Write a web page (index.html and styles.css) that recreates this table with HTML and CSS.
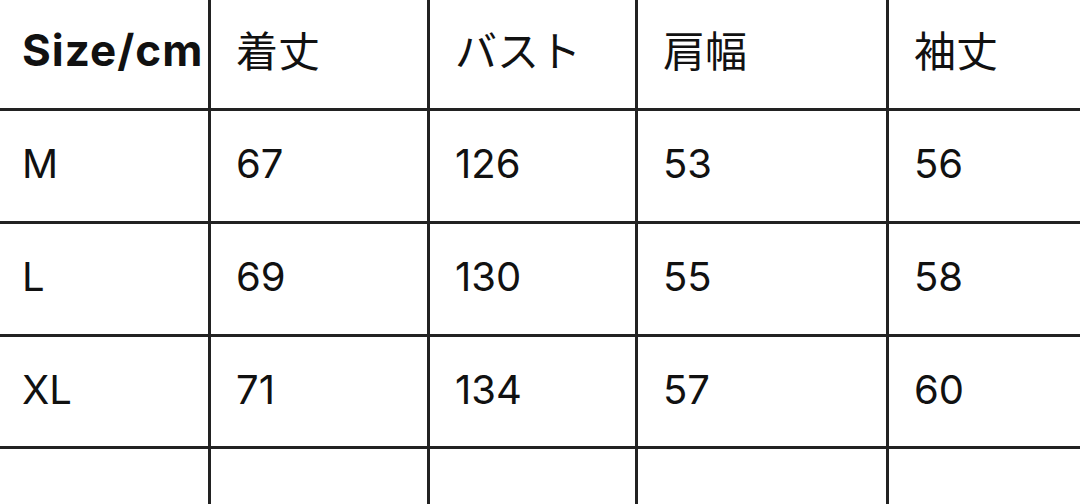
FILE: index.html
```html
<!DOCTYPE html>
<html lang="ja">
<head>
<meta charset="utf-8">
<link rel="stylesheet" href="styles.css">
</head>
<body>
<div class="table">
  <div class="cell head first">Size/cm</div>
  <div class="cell head cjk">着丈</div>
  <div class="cell head cjk">バスト</div>
  <div class="cell head cjk">肩幅</div>
  <div class="cell head cjk">袖丈</div>

  <div class="cell first">M</div>
  <div class="cell">67</div>
  <div class="cell">126</div>
  <div class="cell">53</div>
  <div class="cell">56</div>

  <div class="cell first">L</div>
  <div class="cell">69</div>
  <div class="cell">130</div>
  <div class="cell">55</div>
  <div class="cell">58</div>

  <div class="cell first">XL</div>
  <div class="cell">71</div>
  <div class="cell">134</div>
  <div class="cell">57</div>
  <div class="cell">60</div>

  <div class="cell first"></div>
  <div class="cell"></div>
  <div class="cell"></div>
  <div class="cell"></div>
  <div class="cell"></div>
</div>
</body>
</html>
```

FILE: styles.css
```css
html, body {
  margin: 0;
  padding: 0;
  background: #fff;
  overflow: hidden;
}

.table {
  display: grid;
  grid-template-columns: 208px 216px 205px 248px 1fr;
  grid-template-rows: 108px 110px 110px 109px 55px;
  gap: 3px;
  background: #222;
  width: 1080px;
  font-family: "Inter", "Noto Sans CJK JP", sans-serif;
  color: #111;
}

.cell {
  background: #fff;
  display: flex;
  align-items: center;
  padding: 0 0 4px 25px;
  font-size: 40px;
  line-height: 1;
}

.cell.first {
  padding-left: 22px;
}

.head {
  padding-bottom: 10px;
}

.head.first {
  font-weight: 700;
  font-size: 44px;
  letter-spacing: 1px;
  padding-bottom: 8px;
}

.cjk {
  font-family: "Noto Sans CJK JP", sans-serif;
  font-size: 42px;
}
```
